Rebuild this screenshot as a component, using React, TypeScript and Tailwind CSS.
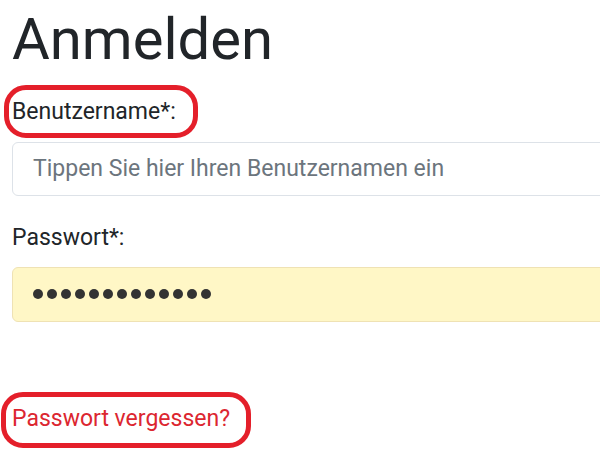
import React from 'react'

const font = { fontFamily: 'Roboto, "Liberation Sans", sans-serif' }

export default function App() {
  return (
    <div style={font} className="w-[600px] h-[471px] overflow-hidden bg-white text-[#212529] pl-3">
      <h1 className="text-[58px] leading-[1.2] font-normal pt-[5px]">Anmelden</h1>

      {/* Benutzername */}
      <div className="mt-[20px]">
        <span className="relative inline-block text-[23px] leading-[1.5]">
          Benutzername*:
          <span className="absolute -left-[8px] -top-[10px] w-[194px] h-[53px] rounded-[22px] border-[5px] border-[#e41f2a]" />
        </span>
      </div>
      <div className="mt-[13px] h-[54px] w-[640px] rounded-[6px] border border-[#dde2e8] bg-white flex items-center px-[20px] text-[23px] text-[#6c757d]">
        Tippen Sie hier Ihren Benutzernamen ein
      </div>

      {/* Passwort */}
      <div className="mt-[25px] text-[23px] leading-[1.5]">Passwort*:</div>
      <div className="mt-[11px] h-[55px] w-[640px] rounded-[6px] border border-[#efe2b4] bg-[#fff7c6] flex items-center gap-[4px] px-[20px]">
        {Array.from({ length: 13 }).map((_, i) => (
          <span key={i} className="w-[10px] h-[10px] rounded-full bg-[#333333]" />
        ))}
      </div>

      {/* Link */}
      <div className="mt-[80px]">
        <a href="#" className="relative inline-block text-[23px] leading-[1.5] text-[#dc2630]">
          Passwort vergessen?
          <span className="absolute -left-[11px] -top-[10px] w-[250px] h-[56px] rounded-[22px] border-[5px] border-[#e41f2a]" />
        </a>
      </div>
    </div>
  )
}
